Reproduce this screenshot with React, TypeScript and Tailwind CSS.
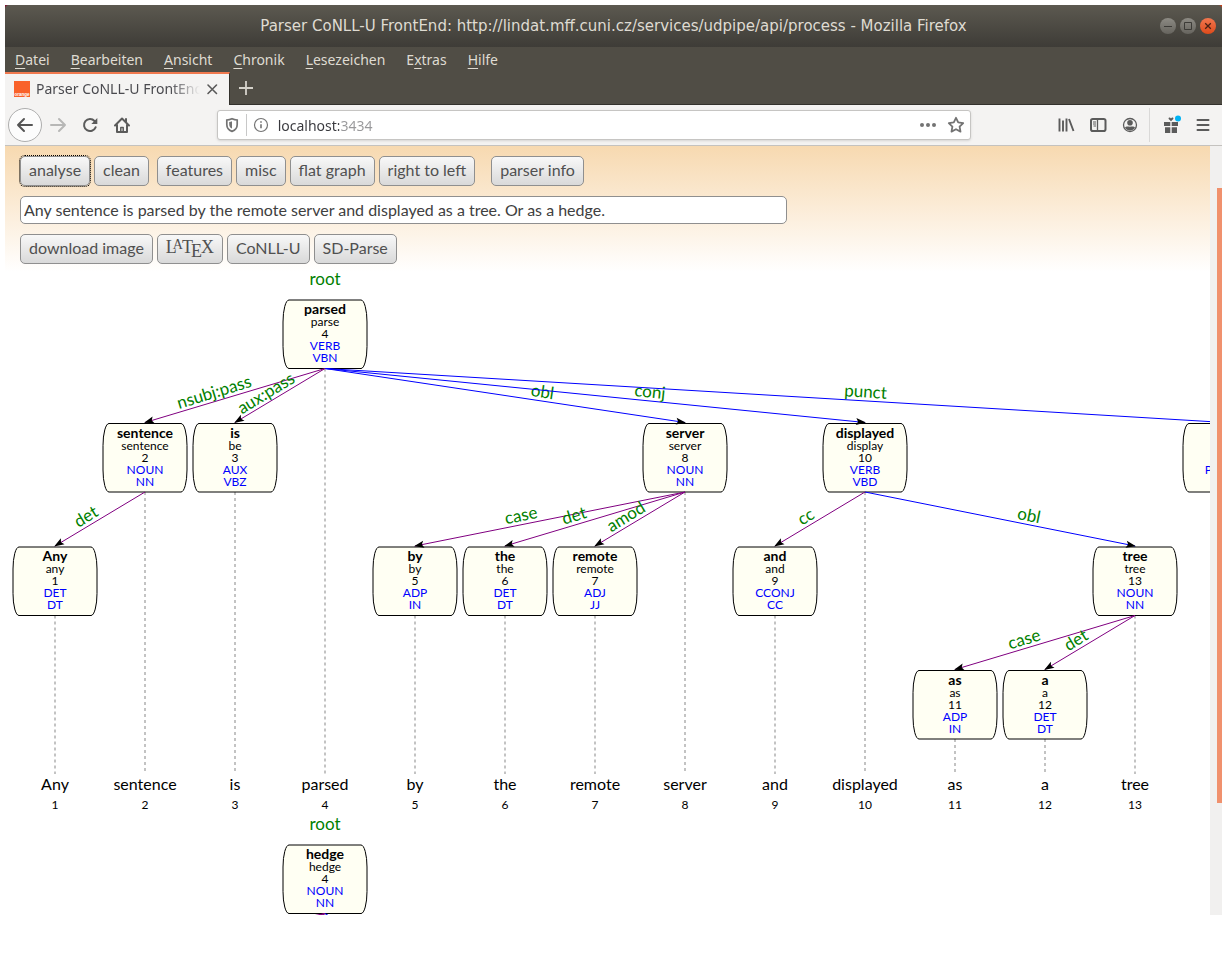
import React from "react";

/* ---------- browser chrome ---------- */

const menuItems = [
  { label: "Datei", key: 0 },
  { label: "Bearbeiten", key: 0 },
  { label: "Ansicht", key: 0 },
  { label: "Chronik", key: 0 },
  { label: "Lesezeichen", key: 0 },
  { label: "Extras", key: 1 },
  { label: "Hilfe", key: 0 },
];

function TitleBar() {
  return (
    <div className="bg-gradient-to-r from-[#7d1230] to-[#c8401a]">
      <div className="relative flex h-[42px] items-center justify-center rounded-t-[4px] bg-gradient-to-b from-[#5c5950] to-[#3e3c37]">
        <h1 className="whitespace-nowrap font-[DejaVu_Sans,sans-serif] text-[15px] text-[#dfdbd2]">
          Parser CoNLL-U FrontEnd: http://lindat.mff.cuni.cz/services/udpipe/api/process - Mozilla Firefox
        </h1>
        <div className="absolute right-[6px] flex gap-[4px]">
          <button aria-label="Minimieren" className="flex size-[16px] items-center justify-center rounded-full bg-gradient-to-b from-[#8d8b84] to-[#66645e]">
            <svg width="16" height="16" viewBox="0 0 16 16"><path d="M4 8.500h8" stroke="#3c3b37" /></svg>
          </button>
          <button aria-label="Maximieren" className="flex size-[16px] items-center justify-center rounded-full bg-gradient-to-b from-[#8d8b84] to-[#66645e]">
            <svg width="16" height="16" viewBox="0 0 16 16"><path d="M4.500 4.500h7v7h-7z" fill="none" stroke="#3c3b37" /></svg>
          </button>
          <button aria-label="Schließen" className="flex size-[16px] items-center justify-center rounded-full bg-gradient-to-b from-[#f2764d] to-[#dd4a18]">
            <svg width="16" height="16" viewBox="0 0 16 16"><path d="M5.200 5.200l5.600 5.600M10.800 5.200l-5.600 5.600" stroke="#4a2013" strokeWidth="1.300" /></svg>
          </button>
        </div>
      </div>
    </div>
  );
}

function MenuBar() {
  return (
    <nav className="flex h-[25px] items-center gap-[21px] bg-[#504d45] px-[10px] text-[14px] text-[#dfdbd2]">
      {menuItems.map(({ label, key }) => (
        <button key={label} className="whitespace-nowrap">
          {label.slice(0, key)}
          <span className="underline underline-offset-3">{label[key]}</span>
          {label.slice(key + 1)}
        </button>
      ))}
    </nav>
  );
}

function TabBar() {
  return (
    <div className="flex h-[33px] bg-[#504d45]">
      <div className="flex w-[225px] items-center border-t-2 border-r border-t-[#f0794f] border-r-[#33312c] bg-[#f4f3f2] pb-[2px] pl-[9px] text-[14px] text-[#4a4a4f]">
        <svg width="16" height="16" viewBox="0 0 16 16" className="shrink-0" aria-hidden="true">
          <rect width="16" height="16" fill="#f9622a" />
          <text x="8" y="14.500" textAnchor="middle" fontSize="4.500" fontWeight="700" fill="#fff" fontFamily="Liberation Sans">orange</text>
        </svg>
        <span className="ml-[6px] w-[164px] overflow-hidden whitespace-nowrap [mask-image:linear-gradient(to_right,black_82%,transparent)]">
          Parser CoNLL-U FrontEnd
        </span>
        <button aria-label="Tab schließen" className="ml-[4px]">
          <svg width="16" height="16" viewBox="0 0 16 16"><path d="M4 4l8.500 8.500M12.500 4L4 12.500" stroke="#5a5a5a" strokeWidth="1.600" strokeLinecap="round" /></svg>
        </button>
      </div>
      <div className="flex flex-1 items-center border-b border-[#33312c] pl-[8px]">
        <button aria-label="Neuer Tab">
          <svg width="16" height="16" viewBox="0 0 16 16"><path d="M8 1v14M1 8h14" stroke="#d5d2ca" strokeWidth="1.800" /></svg>
        </button>
      </div>
    </div>
  );
}

function NavButton({ label, children }: { label: string; children: React.ReactNode }) {
  return (
    <button aria-label={label} className="flex size-[32px] shrink-0 items-center justify-center">
      <svg width="18" height="18" viewBox="0 0 18 18" fill="none" stroke="#5b5b5b" strokeWidth="2" strokeLinecap="round" strokeLinejoin="round">
        {children}
      </svg>
    </button>
  );
}

function NavBar() {
  return (
    <div className="flex h-[41px] items-center border-b border-[#c4c2bf] bg-[#f4f3f2] pr-[3px] pl-[3px]">
      <button aria-label="Zurück" className="flex size-[34px] shrink-0 items-center justify-center rounded-full border border-[#aeaeae] bg-[#fcfcfc]">
        <svg width="18" height="18" viewBox="0 0 18 18" fill="none" stroke="#555" strokeWidth="2" strokeLinecap="round" strokeLinejoin="round">
          <path d="M16 9H2M8 3L2 9l6 6" />
        </svg>
      </button>
      <NavButton label="Vor">
        <path d="M2 9h14M10 3l6 6-6 6" stroke="#b7b7b6" />
      </NavButton>
      <NavButton label="Neu laden">
        <path d="M14.600 11.300A6 6 0 1 1 13.500 5" />
        <path d="M16.300 2v6h-6z" fill="#5b5b5b" stroke="none" />
      </NavButton>
      <NavButton label="Startseite">
        <path d="M2 9.500L9 2.500l7 7M4 9v7h10V9" />
        <path d="M13 3v3" />
        <path d="M7.800 16v-4.500h2.400V16" strokeWidth="1.500" />
      </NavButton>
      <div className="grow-[80] basis-0" />
      <div className="flex h-[30px] grow-[754] basis-0 items-center rounded-[3px] border border-[#c6c5c3] bg-white pr-[5px] pl-[6px] shadow-sm">
        <svg width="16" height="16" viewBox="0 0 16 16" fill="none" aria-hidden="true">
          <path d="M8 1.800c2 .9 3.600 1.200 5.200 1.200v4.500c0 3.300-2 5.700-5.200 6.900-3.200-1.200-5.200-3.600-5.200-6.900V3C4.400 3 6 2.700 8 1.800z" stroke="#737373" strokeWidth="1.700" />
          <path d="M8 4.300v7.300c-1.700-.9-2.800-2.300-2.800-4.400V5C6.200 4.900 7.200 4.700 8 4.300z" fill="#737373" />
        </svg>
        <span className="mx-[6px] h-[22px] w-px bg-[#c8c8c8]" />
        <svg width="16" height="16" viewBox="0 0 16 16" fill="none" stroke="#737373" aria-hidden="true">
          <circle cx="8" cy="8" r="6.500" strokeWidth="1.200" />
          <path d="M8 7.300v4M8 4.300v1.500" strokeWidth="1.600" />
        </svg>
        <input
          aria-label="Adresse"
          defaultValue="localhost:3434"
          className="ml-[9px] w-0 flex-1 bg-[linear-gradient(to_right,#38383d_61px,#98989a_61px)] bg-clip-text text-[14px] text-transparent outline-none"
        />
        <button aria-label="Seitenaktionen">
          <svg width="18" height="16" viewBox="0 0 18 16" fill="#737373"><circle cx="3" cy="8" r="2" /><circle cx="9" cy="8" r="2" /><circle cx="15" cy="8" r="2" /></svg>
        </button>
        <button aria-label="Lesezeichen hinzufügen" className="ml-[10px]">
          <svg width="18" height="18" viewBox="0 0 18 18" fill="none" stroke="#737373" strokeWidth="1.800" strokeLinejoin="round">
            <path d="M9 1.800l2.200 4.600 5 .7-3.600 3.500.9 5L9 13.200l-4.500 2.400.9-5L1.800 7.100l5-.7z" />
          </svg>
        </button>
      </div>
      <div className="grow-[80] basis-0" />
      <NavButton label="Bibliothek">
        <path d="M2.500 2.500v13M6 4.500v11M9.500 2.500v13M12 3l4.500 12" strokeWidth="1.900" strokeLinecap="butt" />
      </NavButton>
      <NavButton label="Seitenleiste">
        <rect x="2" y="3" width="14.500" height="12" rx="1.800" />
        <path d="M8.500 3v12" strokeWidth="1.300" />
        <path d="M4 6h3M4 8h3M4.500 10H7" strokeWidth="1" strokeLinecap="butt" />
      </NavButton>
      <NavButton label="Konto">
        <circle cx="9" cy="9" r="6.500" strokeWidth="1.300" />
        <circle cx="9" cy="6.800" r="2.800" fill="#5b5b5b" stroke="none" />
        <path d="M4 11.500c1-1.300 2.500-1.300 5-.8 2.500-.5 4-.5 5 .8-1 2-2.800 3-5 3s-4-1-5-3z" fill="#5b5b5b" stroke="none" />
      </NavButton>
      <span className="mr-[5px] ml-[3px] h-[34px] w-px shrink-0 bg-[#dad9d8]" />
      <button aria-label="Neuigkeiten" className="flex size-[32px] shrink-0 items-center justify-center">
        <svg width="20" height="20" viewBox="0 0 20 20" fill="#5b5b5b">
          <path d="M3 7h6.300v4H3zM10.700 7H17v4h-6.300zM4 12.200h5.300V18H4zM10.700 12.200H16V18h-5.300zM10 6.300L7.700 4C7 2.600 9 2 10 3.400c1-1.400 3-.8 2.300.6z" />
          <circle cx="17" cy="3.500" r="3" fill="#00b3f4" />
        </svg>
      </button>
      <NavButton label="Menü öffnen">
        <path d="M3.500 4h11M3.500 9h11M3.500 14h11" />
      </NavButton>
    </div>
  );
}

/* ---------- parser form ---------- */

function Button({ children, focused = false, gap = "" }: { children: React.ReactNode; focused?: boolean; gap?: string }) {
  return (
    <button
      className={`h-[30px] rounded-[5px] border border-[#8f8f8f] bg-gradient-to-b from-[#f8f8f8] to-[#d9d9d9] px-[8px] pb-[2px] whitespace-nowrap ${focused ? "outline-1 outline-dotted outline-black" : ""} ${gap}`}
    >
      {children}
    </button>
  );
}

function ParserForm() {
  return (
    <form className="flex flex-col gap-[10px] bg-gradient-to-b from-[#f7d9b0] to-white px-[15px] pt-[10px] pb-[8px] text-[16px] leading-[20px] text-[#505050]" onSubmit={(e) => e.preventDefault()}>
      <div className="flex gap-[4px]">
        <Button focused>analyse</Button>
        <Button>clean</Button>
        <Button gap="ml-[4px]">features</Button>
        <Button>misc</Button>
        <Button>flat graph</Button>
        <Button>right to left</Button>
        <Button gap="ml-[12px]">parser info</Button>
      </div>
      <input
        aria-label="Sentence"
        defaultValue="Any sentence is parsed by the remote server and displayed as a tree. Or as a hedge."
        className="h-[28px] w-[767px] max-w-full rounded-[5px] border border-[#8f8f8f] bg-white px-[3px] pb-[2px] text-[#404040]"
      />
      <div className="flex gap-[4px]">
        <Button>download image</Button>
        <Button>
          <span className="font-['Liberation_Serif',serif] text-[18px]">
            L<span className="-ml-[4px] align-[4px] text-[14px]">A</span>
            <span className="-ml-[1px]">T</span>
            <span className="-ml-[2px] align-[-4px]">E</span>
            <span className="-ml-[1px]">X</span>
          </span>
        </Button>
        <Button>CoNLL-U</Button>
        <Button>SD-Parse</Button>
      </div>
    </form>
  );
}

/* ---------- dependency trees ---------- */

type Token = { form: string; lemma: string; upos: string; xpos: string; head: number; rel: string; level: number };

const t = (form: string, lemma: string, upos: string, xpos: string, head: number, rel: string, level: number): Token => ({
  form, lemma, upos, xpos, head, rel, level,
});

const first: Token[] = [
  t("Any", "any", "DET", "DT", 2, "det", 2),
  t("sentence", "sentence", "NOUN", "NN", 4, "nsubj:pass", 1),
  t("is", "be", "AUX", "VBZ", 4, "aux:pass", 1),
  t("parsed", "parse", "VERB", "VBN", 0, "root", 0),
  t("by", "by", "ADP", "IN", 8, "case", 2),
  t("the", "the", "DET", "DT", 8, "det", 2),
  t("remote", "remote", "ADJ", "JJ", 8, "amod", 2),
  t("server", "server", "NOUN", "NN", 4, "obl", 1),
  t("and", "and", "CCONJ", "CC", 10, "cc", 2),
  t("displayed", "display", "VERB", "VBD", 4, "conj", 1),
  t("as", "as", "ADP", "IN", 13, "case", 3),
  t("a", "a", "DET", "DT", 13, "det", 3),
  t("tree", "tree", "NOUN", "NN", 10, "obl", 2),
  t(".", ".", "PUNCT", ".", 4, "punct", 1),
];

const second: Token[] = [
  t("Or", "or", "CCONJ", "CC", 4, "cc", 1),
  t("as", "as", "ADP", "IN", 4, "case", 1),
  t("a", "a", "DET", "DT", 4, "det", 1),
  t("hedge", "hedge", "NOUN", "NN", 0, "root", 0),
  t(".", ".", "PUNCT", ".", 4, "punct", 1),
];

const COLUMN = 90;
const LEVEL = 123.5;
const BOX_WIDTH = 84;
const BOX_HEIGHT = 68.5;
const BOX_TOP = 28;

const centerX = (index: number) => 50 + index * COLUMN;
const topY = (level: number) => BOX_TOP + level * LEVEL;

function Node({ token, index }: { token: Token; index: number }) {
  const x = centerX(index);
  const y = topY(token.level);
  return (
    <g textAnchor="middle" fontSize="12">
      <rect x={x - BOX_WIDTH / 2} y={y} width={BOX_WIDTH} height={BOX_HEIGHT} rx="6" ry="22" fill="#fffff3" stroke="#000" />
      <text x={x} y={y + 14} fontSize="14" fontWeight="700">{token.form}</text>
      <text x={x} y={y + 26}>{token.lemma}</text>
      <text x={x} y={y + 38}>{index + 1}</text>
      <text x={x} y={y + 50} fill="#0000ff">{token.upos}</text>
      <text x={x} y={y + 62} fill="#0000ff">{token.xpos}</text>
    </g>
  );
}

function Edge({ tokens, index }: { tokens: Token[]; index: number }) {
  const token = tokens[index];
  const x = centerX(index);
  const y = topY(token.level);
  if (token.head === 0) {
    return <text x={x} y={y - 15} textAnchor="middle" fontSize="17" fill="#008000">{token.rel}</text>;
  }
  const hx = centerX(token.head - 1);
  const hy = topY(tokens[token.head - 1].level) + BOX_HEIGHT;
  const leftward = x < hx;
  const slope = (Math.atan2(y - hy, x - hx) * 180) / Math.PI;
  const angle = leftward ? slope - 180 : slope;
  const lx = hx + (x - hx) * 0.6;
  const ly = hy + (y - hy) * 0.6;
  return (
    <g>
      <path d={`M${hx} ${hy}L${x} ${y - 1}`} stroke={leftward ? "#800080" : "#0000ff"} fill="none" />
      <path d="M1 0L-9 3.500L-7 0L-9 -3.500Z" transform={`translate(${x} ${y - 1}) rotate(${slope})`} />
      <text transform={`translate(${lx} ${ly}) rotate(${angle})`} y="-4" textAnchor="middle" fontSize="17" fill="#008000">
        {token.rel}
      </text>
    </g>
  );
}

function Tree({ tokens, height, label }: { tokens: Token[]; height: number; label: string }) {
  const wordY = height - 27;
  return (
    <svg width={tokens.length * COLUMN + 10} height={height} className="block shrink-0" role="img" aria-label={label}>
      {tokens.map((token, i) => (
        <path key={i} d={`M${centerX(i)} ${topY(token.level) + BOX_HEIGHT}V${wordY - 16}`} stroke="#bdbdbd" strokeWidth="1.800" strokeDasharray="3 3" />
      ))}
      {tokens.map((token, i) => <Node key={i} token={token} index={i} />)}
      {tokens.map((_, i) => <Edge key={i} tokens={tokens} index={i} />)}
      {tokens.map((token, i) => (
        <g key={i} textAnchor="middle">
          <text x={centerX(i)} y={wordY} fontSize="16">{token.form}</text>
          <text x={centerX(i)} y={wordY + 19} fontSize="12">{i + 1}</text>
        </g>
      ))}
    </svg>
  );
}

export default function App() {
  return (
    <div className="flex h-screen flex-col bg-white pt-[5px] pr-[9px] pb-[52px] pl-[5px] font-['Noto_Sans',sans-serif]">
      <TitleBar />
      <MenuBar />
      <TabBar />
      <NavBar />
      <div className="flex min-h-0 flex-1">
        <main className="min-w-0 flex-1 overflow-hidden font-[Lato,sans-serif]">
          <ParserForm />
          <Tree tokens={first} height={545} label="Any sentence is parsed by the remote server and displayed as a tree." />
          <Tree tokens={second} height={298} label="Or as a hedge." />
        </main>
        <div className="flex w-[12px] shrink-0 flex-col items-end bg-[#f1f0ef] pt-[42px]">
          <div className="h-11/13 w-[5px] bg-[#f0916d]" />
        </div>
      </div>
    </div>
  );
}
